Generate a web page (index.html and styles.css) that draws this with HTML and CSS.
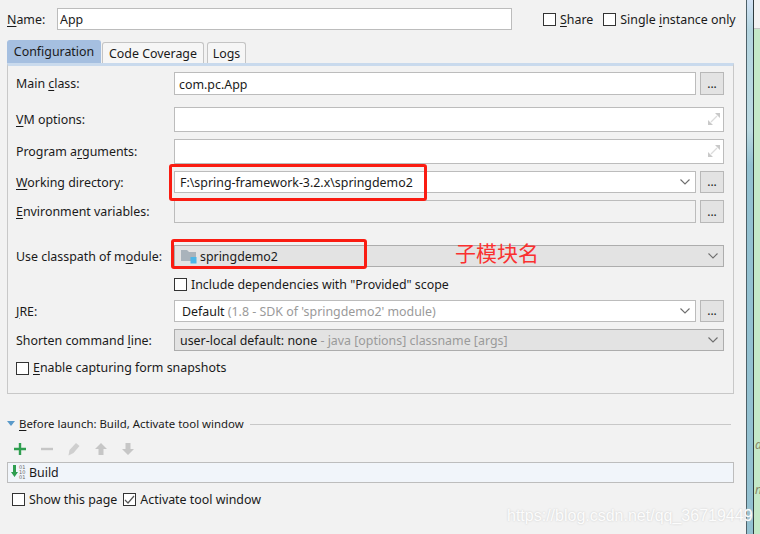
FILE: index.html
```html
<!DOCTYPE html>
<html lang="en">
<head>
<meta charset="utf-8">
<title>Run Configuration</title>
<link rel="stylesheet" href="styles.css">
</head>
<body>
<div class="page">
  <main class="dialog">
    <div class="name-row">
      <label class="name-label"><u>N</u>ame:</label>
      <div class="field name-field">App</div>
      <label class="check share"><span class="box"></span><span class="low"><u>S</u>hare</span></label>
      <label class="check single"><span class="box"></span><span class="low">Single <u>i</u>nstance only</span></label>
    </div>
    <div class="tabs">
      <div class="tab active">Configuration</div>
      <div class="tab t-code">Code Coverage</div>
      <div class="tab t-logs">Logs</div>
    </div>
    <section class="panel">
      <div class="row r-main">
        <span class="label">Main <u>c</u>lass:</span>
        <div class="field grow h23">com.pc.App</div>
        <div class="dots h23">...</div>
      </div>
      <div class="row r-vm">
        <span class="label"><u>V</u>M options:</span>
        <div class="field grow h25 expand">
          <svg class="exp" width="12" height="12" viewBox="0 0 12 12"><path d="M7 0h5v5zM0 12V7l5 5z" fill="#c9c9c9"/><path d="M9 3 3 9" stroke="#dcdcdc" stroke-width="1.2"/></svg>
        </div>
      </div>
      <div class="row r-args">
        <span class="label">Program a<u>r</u>guments:</span>
        <div class="field grow h25 expand">
          <svg class="exp" width="12" height="12" viewBox="0 0 12 12"><path d="M7 0h5v5zM0 12V7l5 5z" fill="#c9c9c9"/><path d="M9 3 3 9" stroke="#dcdcdc" stroke-width="1.2"/></svg>
        </div>
      </div>
      <div class="row r-work">
        <span class="label"><u>W</u>orking directory:</span>
        <div class="field grow h22 combo"><span class="pad6">F:\spring-framework-3.2.x\springdemo2</span><svg class="chev" width="10" height="6" viewBox="0 0 10 6"><path d="M.5.5 5 5 9.500.5" fill="none" stroke="#6e6e6e" stroke-width="1.1"/></svg></div>
        <div class="dots h22">...</div>
      </div>
      <div class="row r-env">
        <span class="label"><u>E</u>nvironment variables:</span>
        <div class="field grow h23 off"></div>
        <div class="dots h23">...</div>
      </div>
      <div class="row r-cp">
        <span class="label">Use classpath of m<u>o</u>dule:</span>
        <div class="field grow h22 combo gray">
          <svg class="folder" width="16" height="15" viewBox="0 0 16 15"><path d="M0 1h6l2 2h7v9H0z" fill="#a9b3bb"/><rect x="9.500" y="8" width="6" height="6.500" fill="#4db5e6"/></svg>
          <span>springdemo2</span>
          <svg class="chev" width="10" height="6" viewBox="0 0 10 6"><path d="M.5.5 5 5 9.500.5" fill="none" stroke="#6e6e6e" stroke-width="1.1"/></svg>
        </div>
      </div>
      <div class="row r-inc">
        <label class="check"><span class="box"></span><span>Include dependencies with "Provided" scope</span></label>
      </div>
      <div class="row r-jre">
        <span class="label"><u>J</u>RE:</span>
        <div class="field grow h22 combo"><span class="pad8">Default <span class="dim">(1.8 - SDK of 'springdemo2' module)</span></span><svg class="chev" width="10" height="6" viewBox="0 0 10 6"><path d="M.5.5 5 5 9.500.5" fill="none" stroke="#6e6e6e" stroke-width="1.1"/></svg></div>
        <div class="dots h22">...</div>
      </div>
      <div class="row r-short">
        <span class="label">Shorten command <u>l</u>ine:</span>
        <div class="field grow h22 combo gray"><span class="pad6">user-local default: none <span class="dim">- java [options] classname [args]</span></span><svg class="chev" width="10" height="6" viewBox="0 0 10 6"><path d="M.5.5 5 5 9.500.5" fill="none" stroke="#6e6e6e" stroke-width="1.1"/></svg></div>
      </div>
      <div class="row r-snap">
        <label class="check"><span class="box"></span><span><u>E</u>nable capturing form snapshots</span></label>
      </div>
    </section>
    <div class="before">
      <svg class="tri" width="8" height="6" viewBox="0 0 8 6"><path d="M0 0h8L4 5z" fill="#5a9ac9"/></svg>
      <span class="before-title"><u>B</u>efore launch: Build, Activate tool window</span>
      <span class="rule"></span>
    </div>
    <div class="tools">
      <svg width="14" height="14" viewBox="0 0 14 14"><path d="M7 1v12M1 7h12" stroke="#2f9e4f" stroke-width="2.4"/></svg>
      <svg width="14" height="14" viewBox="0 0 14 14"><path d="M1 7h12" stroke="#c6c6c6" stroke-width="2.4"/></svg>
      <svg width="14" height="14" viewBox="0 0 14 14"><path d="M1.500 13.500 2.500 8 9 1l3.500 3L6.500 11z" fill="#cfcfcf"/></svg>
      <svg width="14" height="14" viewBox="0 0 14 14"><path d="M7 1l6 6H9.500v6h-5V7H1z" fill="#c6c6c6"/></svg>
      <svg width="14" height="14" viewBox="0 0 14 14"><path d="M7 13l6-6H9.500V1h-5v6H1z" fill="#c6c6c6"/></svg>
    </div>
    <div class="list">
      <svg class="build-ico" width="7" height="12" viewBox="0 0 7 12"><path d="M2 0h3v7h2l-3.500 5L0 7h2z" fill="#2f9e4f"/></svg>
      <span class="bits">01<br>10<br>01</span>
      <span>Build</span>
    </div>
    <div class="bottom">
      <label class="check"><span class="box"></span><span class="low">Show this page</span></label>
      <label class="check"><span class="box on"><svg width="11" height="9" viewBox="0 0 11 9"><path d="M1 5l3 3 6-7" fill="none" stroke="#555" stroke-width="1.2"/></svg></span><span class="low">Activate tool window</span></label>
    </div>
  </main>
  <aside class="strip">
    <div class="strip-blue"></div>
    <div class="strip-green"><div class="strip-top"></div><div class="strip-body"><span class="frag f1">d</span><span class="frag f2">n</span></div></div>
  </aside>
</div>
<div class="mark mark-work"></div>
<div class="mark mark-cp"></div>
<div class="note">子模块名</div>
<div class="watermark">https://blog.csdn.net/qq_36719449</div>
</body>
</html>
```

FILE: styles.css
```css
* { box-sizing: border-box; }
html, body { margin: 0; padding: 0; }
body {
  width: 760px; height: 534px; overflow: hidden; position: relative;
  background: #f2f2f2; color: #1a1a1a;
  font: 12.4px/18px "Noto Sans", "Open Sans", sans-serif;
}
u { text-underline-offset: 2px; }
.page { display: flex; width: 760px; height: 534px; }
.dialog { width: 746px; flex: none; padding: 8px 0 0 7px; }
.name-row { display: flex; align-items: center; height: 22px; }
.name-label { width: 50px; padding-top: 2px; }
.low { padding-top: 2px; }
.field {
  border: 1px solid #bcbcbc; background: #fff; display: flex; align-items: center;
  padding: 2px 0 0 4px; min-width: 0; position: relative;
}
.name-field { width: 455px; height: 22px; padding-left: 2px; }
.check { display: flex; align-items: center; gap: 4px; white-space: nowrap; }
.box {
  width: 13px; height: 13px; border: 1px solid #333; background: #fff; flex: none;
  display: flex; align-items: center; justify-content: center;
}
.share { margin-left: 31px; }
.single { margin-left: 10px; }
.tabs { display: flex; margin-top: 10px; height: 23px; align-items: flex-end; }
.tab {
  height: 21px; border: 1px solid #c4c4c4; border-bottom: 0; text-align: center;
  border-radius: 3px 3px 0 0; background: #f6f6f6; line-height: 22px; white-space: nowrap;
}
.tab.active {
  width: 94px; height: 23px; background: #a5bfe0; border-color: #a5bfe0; line-height: 22px;
}
.t-code { width: 102px; margin-left: 1px; }
.t-logs { width: 39px; margin-left: 3px; }
.panel {
  width: 727px; height: 331px; border: 1px solid #c8c8c8; border-top: 3px solid #c9daed;
  padding: 0 9px 0 8px;
}
.row { display: flex; align-items: center; }
.label { width: 158px; flex: none; white-space: nowrap; padding-top: 1px; }
.grow { flex: 1; }
.h22 { height: 22px; }
.h23 { height: 23px; }
.h25 { height: 25px; }
.dots {
  width: 24px; margin-left: 4px; flex: none; background: #e3e3e3; border: 1px solid #b8b8b8;
  display: flex; align-items: center; justify-content: center; font-size: 12px; line-height: 12px; color: #222;
}
.off { background: #f2f2f2; }
.gray { background: #e3e3e3; border-color: #adadad; }
.combo { padding-left: 0; }
.pad6 { padding-left: 5px; white-space: pre; }
.pad8 { padding-left: 7px; white-space: pre; }
.dim { color: #9a9a9a; }
.chev { position: absolute; right: 5px; top: 50%; margin-top: -3px; }
.exp { position: absolute; right: 3px; top: 5px; }
.folder { margin: -2px 3px 0 6px; flex: none; }
.r-main { margin-top: 6px; }
.r-vm { margin-top: 12px; }
.r-args { margin-top: 7px; }
.r-work { margin-top: 7px; }
.r-env { margin-top: 7px; }
.r-cp { margin-top: 22px; }
.r-inc { margin-top: 8px; padding-left: 158px; height: 19px; }
.r-jre { margin-top: 6px; }
.r-short { margin-top: 7px; }
.r-snap { margin-top: 8px; height: 18px; }
.before { display: flex; align-items: center; margin-top: 21px; height: 18px; }
.tri { margin-right: 4px; }
.before-title { font-size: 11.4px; white-space: nowrap; }
.rule { flex: 1; height: 1px; background: #c8c8c8; margin: 0 15px 0 6px; }
.tools { display: flex; gap: 13px; height: 14px; margin: 9px 0 0 6px; }
.list {
  width: 727px; height: 21px; margin-top: 6px; border: 1px solid #bdbdbd; background: #f1f5fa;
  display: flex; align-items: center; padding-left: 3px; position: relative;
}
.build-ico { flex: none; margin-top: -3px; }
.bits { font: 5px/5px "DejaVu Sans", sans-serif; color: #666; width: 8px; margin: 0 2px 0 1px; flex: none; }
.bottom { display: flex; gap: 6px; margin: 7px 0 0 5px; height: 18px; align-items: center; }
.strip { width: 14px; flex: none; display: flex; height: 534px; }
.strip-blue {
  width: 8px; border-left: 1.5px solid #4d6169; border-right: 1.5px solid #2f3b3f;
  background: linear-gradient(#d3e3f6 0, #b4d5e0 30px, #bcdae2 130px, #93c1d1 165px, #93c1d1 100%);
}
.strip-green { flex: 1; display: flex; flex-direction: column; background: #c4e8c8; }
.strip-top { height: 29px; flex: none; background: #f2f2f2; border-bottom: 1px solid #c6c6c6; }
.strip-body { flex: 1; position: relative; overflow: hidden; }
.frag { position: absolute; left: 1px; color: #8a8a6a; font-style: italic; font-size: 12px; line-height: 14px; }
.f1 { top: 409px; }
.f2 { top: 454px; }
.mark { position: absolute; border: 3px solid #fa1c12; border-radius: 3px; }
.mark-work { left: 169px; top: 164px; width: 258px; height: 37px; }
.mark-cp { left: 171px; top: 239px; width: 196px; height: 30px; }
.note {
  position: absolute; left: 455px; top: 240px; color: #fa3030; font: 21px/24px "Noto Sans CJK SC", sans-serif; white-space: nowrap;
}
.watermark {
  position: absolute; left: 507px; top: 505px; color: #fcfcfc; font: 16px/22px "Liberation Sans", sans-serif;
  white-space: nowrap; text-shadow: 0 0 2px #c8c8c8;
}
```
